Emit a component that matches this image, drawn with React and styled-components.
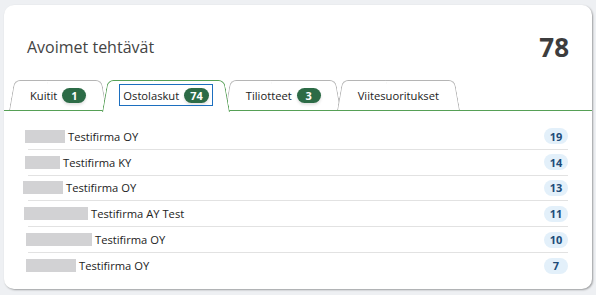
import React from "react";
import styled, { createGlobalStyle, css } from "styled-components";

const GlobalStyle = createGlobalStyle`
    body {
        margin: 0;
        background: #eef0f3;
        font-family: "Open Sans", "Noto Sans", sans-serif;
    }
`;

const tabs = [
    { label: "Kuitit", count: 1 },
    { label: "Ostolaskut", count: 74, active: true },
    { label: "Tiliotteet", count: 3 },
    { label: "Viitesuoritukset" },
];

const rows = [
    { name: "Testifirma OY", count: 19, box: 40, shift: -3 },
    { name: "Testifirma KY", count: 14, box: 35, shift: -3 },
    { name: "Testifirma OY", count: 13, box: 40, shift: -5 },
    { name: "Testifirma AY Test", count: 11, box: 64, shift: -4 },
    { name: "Testifirma OY", count: 10, box: 66, shift: -2 },
    { name: "Testifirma OY", count: 7, box: 50, shift: -2 },
];

function App() {
    return (
        <>
            <GlobalStyle />
            <Card>
                <Header>
                    <Title>Avoimet tehtävät</Title>
                    <Total>78</Total>
                </Header>
                <TabBar>
                    {tabs.map((t) => (
                        <Tab key={t.label} $active={t.active}>
                            <TabLabel $focused={t.active}>
                                {t.label}
                                {t.count !== undefined && <TabBadge>{t.count}</TabBadge>}
                            </TabLabel>
                        </Tab>
                    ))}
                </TabBar>
                <List>
                    {rows.map((r, i) => (
                        <Row key={i}>
                            <Company>
                                <Redacted $w={r.box} $shift={r.shift} />
                                {r.name}
                            </Company>
                            <Count>{r.count}</Count>
                        </Row>
                    ))}
                </List>
            </Card>
        </>
    );
}

const Card = styled.div`
    margin: 5px 4px;
    width: 588px;
    height: 284px;
    background: #fff;
    border-radius: 10px;
    box-shadow: 1px 1px 2px rgba(0, 0, 0, 0.35);
    box-sizing: border-box;
    overflow: hidden;
`;

const Header = styled.div`
    display: flex;
    align-items: center;
    justify-content: space-between;
    height: 67px;
    padding: 8px 23px 0 23px;
`;

const Title = styled.div`
    font-size: 16px;
    color: #444;
`;

const Total = styled.div`
    font-size: 26px;
    font-weight: 700;
    color: #3d3d3d;
`;

const TabBar = styled.div`
    display: flex;
    align-items: flex-end;
    height: 30px;
    padding-left: 5px;
    border-bottom: 1.5px solid #56a056;
`;

const Tab = styled.div`
    position: relative;
    isolation: isolate;
    display: flex;
    align-items: center;
    height: 30px;
    padding: 0 21px;
    margin-right: -5px;
    z-index: ${(p) => (p.$active ? 2 : 1)};

    &::before,
    &::after {
        content: "";
        position: absolute;
        top: 0;
        bottom: 0;
        width: 55%;
        background: #fff;
        border: 1px solid #b5b5b5;
        border-bottom: none;
        z-index: -1;
    }
    &::before {
        left: 0;
        border-right: none;
        border-top-left-radius: 6px;
        transform: skewX(-10deg);
        transform-origin: bottom left;
    }
    &::after {
        right: 0;
        border-left: none;
        border-top-right-radius: 6px;
        transform: skewX(10deg);
        transform-origin: bottom right;
    }

    ${(p) =>
        p.$active &&
        css`
            &::before,
            &::after {
                border-color: #56a056;
                bottom: -2px;
            }
        `}
`;

const TabLabel = styled.div`
    display: flex;
    align-items: center;
    gap: 5px;
    font-size: 11.2px;
    color: #222;
    padding: 2.5px 3px;
    margin: 0 -3px;
    outline: ${(p) => (p.$focused ? "1px solid #1c6fbf" : "none")};
`;

const TabBadge = styled.span`
    display: inline-flex;
    align-items: center;
    justify-content: center;
    min-width: 24px;
    height: 15px;
    padding: 0 6px;
    box-sizing: border-box;
    border-radius: 8px;
    background: #2c6b46;
    color: #fff;
    font-size: 11px;
    font-weight: 700;
    box-shadow: 0 2px 3px rgba(0, 0, 0, 0.12);
`;

const List = styled.div`
    padding: 13px 24px 0 24px;
`;

const Row = styled.div`
    display: flex;
    align-items: center;
    justify-content: space-between;
    height: 25.8px;
    box-sizing: border-box;
    border-bottom: 1px solid #e2e2e2;

    &:last-child {
        border-bottom: none;
    }
`;

const Company = styled.div`
    display: flex;
    align-items: center;
    font-size: 11.2px;
    color: #222;
`;

const Redacted = styled.span`
    display: inline-block;
    width: ${(p) => p.$w}px;
    height: 13px;
    margin-left: ${(p) => p.$shift}px;
    margin-right: 3px;
    background: #d2d2d4;
`;

const Count = styled.span`
    display: inline-flex;
    align-items: center;
    justify-content: center;
    min-width: 24px;
    height: 16px;
    padding: 0 5px;
    box-sizing: border-box;
    border-radius: 8px;
    background: #e3f0fa;
    color: #1d4c78;
    font-size: 11px;
    font-weight: 700;
`;

export default App;
